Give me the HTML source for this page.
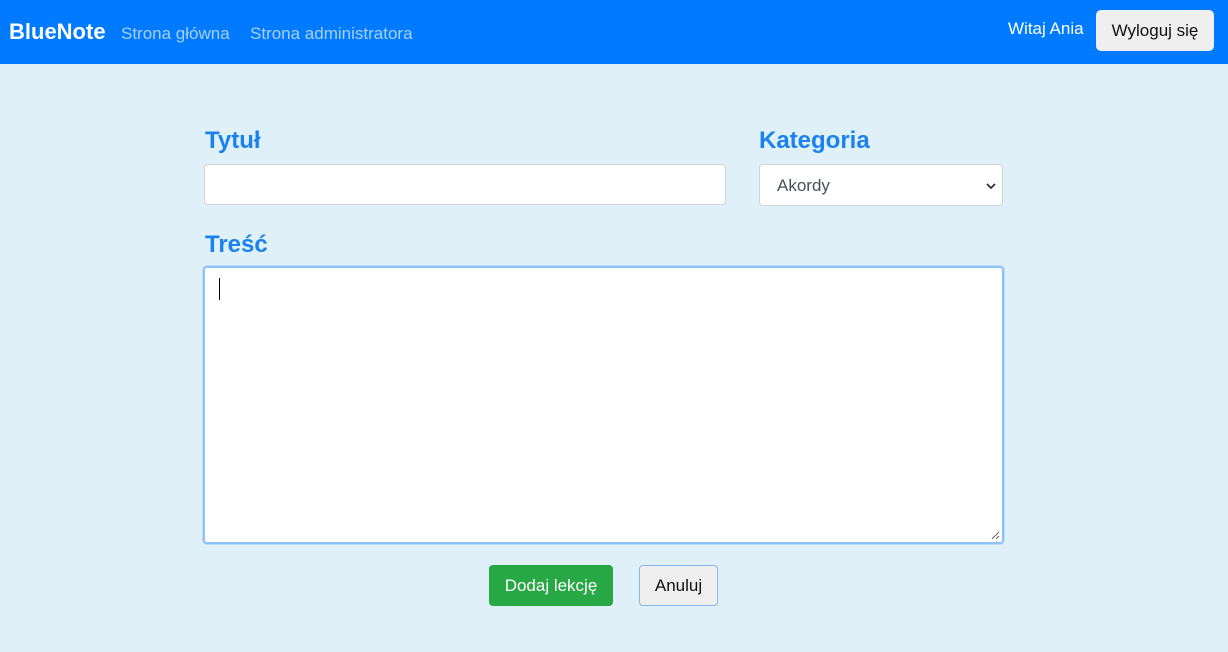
<!DOCTYPE html>
<html><head><style>
*{box-sizing:border-box;margin:0;padding:0}
body{width:1228px;height:652px;background:#e0f0f8;font-family:"Liberation Sans",sans-serif;position:relative;overflow:hidden}
.nav{position:absolute;left:0;top:0;width:1228px;height:64px;background:#007bff}
.brand{position:absolute;left:9px;top:19px;font-size:22px;font-weight:bold;color:#fff}
.link{position:absolute;top:24px;font-size:17px;color:#a9cff7}
.hi{position:absolute;left:1008px;top:19px;font-size:17px;color:#fff}
.out{position:absolute;left:1096px;top:10px;width:118px;height:41px;background:#efefef;border-radius:5px;font-size:17px;color:#111;text-align:center;line-height:41px}
.lbl{position:absolute;font-size:24px;font-weight:bold;color:#1a82ee}
.inp{position:absolute;background:#fff;border:1px solid #ced4da;border-radius:4px}
</style></head><body>
<div class="nav">
<div class="brand">BlueNote</div>
<div class="link" style="left:121px">Strona główna</div>
<div class="link" style="left:250px">Strona administratora</div>
<div class="hi">Witaj Ania</div>
<div class="out">Wyloguj się</div>
</div>
<div class="lbl" style="left:205px;top:127px">Tytuł</div>
<div class="lbl" style="left:759px;top:127px">Kategoria</div>
<div class="inp" style="left:204px;top:164px;width:522px;height:41px"></div>
<div class="inp" style="left:759px;top:164px;width:244px;height:42px;font-size:17px;color:#495057;padding:11px 0 0 17px">Akordy<svg style="position:absolute;right:6px;top:17px" width="10" height="8" viewBox="0 0 10 8"><path d="M1 2l4 4 4-4" stroke="#333" stroke-width="1.8" fill="none"/></svg></div>
<div class="lbl" style="left:205px;top:231px">Treść</div>
<div class="inp" style="left:203px;top:266px;width:801px;height:278px;border:2px solid #8ec2f8;box-shadow:0 0 0 1px #bcdcfb"><div style="position:absolute;left:14px;top:10px;width:1px;height:22px;background:#000"></div><svg style="position:absolute;right:2px;bottom:2px" width="9" height="9" viewBox="0 0 9 9"><path d="M8 1L1 8M8 5L5 8" stroke="#666" stroke-width="1"/></svg></div>
<div style="position:absolute;left:489px;top:565px;width:124px;height:41px;background:#28a745;border-radius:4px;color:#fff;font-size:17px;text-align:center;line-height:41px">Dodaj lekcję</div>
<div style="position:absolute;left:639px;top:565px;width:79px;height:41px;background:#efefef;border:1px solid #86b7ee;border-radius:4px;color:#111;font-size:17px;text-align:center;line-height:39px">Anuluj</div>
</body></html>
